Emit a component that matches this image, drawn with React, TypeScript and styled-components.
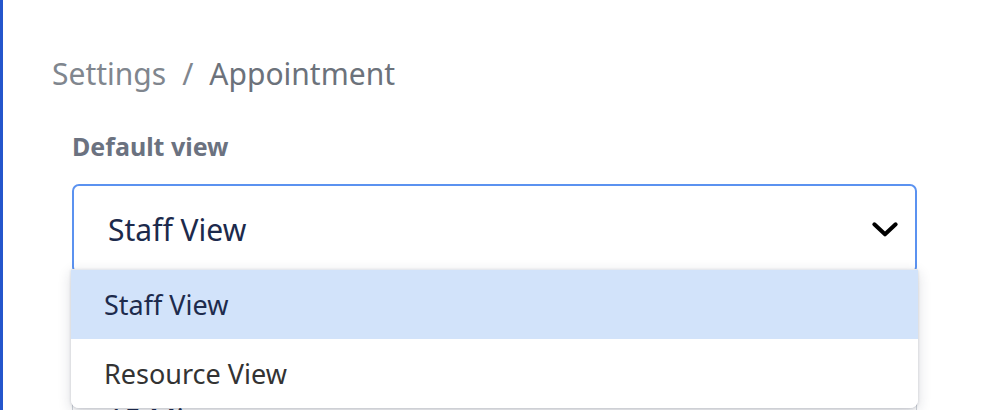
import styled, { createGlobalStyle } from 'styled-components'

const GlobalStyle = createGlobalStyle`
  html, body {
    margin: 0;
    padding: 0;
    background: #ffffff;
    font-family: "Noto Sans", "Open Sans", Arial, sans-serif;
  }
`

const Page = styled.div`
  display: flex;
  height: 410px;
  overflow: hidden;
`

const SideEdge = styled.div`
  width: 3px;
  flex-shrink: 0;
  background: #2456cc;
`

const Content = styled.main`
  flex: 1;
  padding: 55px 0 0 49px;
`

const Breadcrumb = styled.nav`
  display: flex;
  gap: 16px;
  font-size: 30px;
  line-height: 38px;
  color: #7b8189;
`

const Crumb = styled.span<{ $current?: boolean }>`
  color: ${p => (p.$current ? '#6c727b' : '#80868e')};
`

const Form = styled.div`
  width: 845px;
  margin: 37px 0 0 20px;
  display: flex;
  flex-direction: column;
  gap: 46px;
`

const Field = styled.div`
  display: flex;
  flex-direction: column;
  gap: 22px;
`

const Label = styled.label`
  font-size: 25px;
  font-weight: 700;
  line-height: 32px;
  color: #6b7280;
`

const SelectWrap = styled.div`
  position: relative;
`

const SelectBox = styled.div<{ $focused?: boolean }>`
  height: 90px;
  box-sizing: border-box;
  display: flex;
  align-items: center;
  justify-content: space-between;
  padding: 0 14px 0 34px;
  border: ${p => (p.$focused ? '2px solid #5b92f0' : '1.5px solid #d0d4da')};
  border-radius: 7px;
  font-size: 30px;
  color: #1c2a4c;
`

const Chevron = () => (
  <svg width="32" height="32" viewBox="0 0 24 24" fill="none">
    <path
      d="M4 8.5 L12 16 L20 8.5"
      stroke="#000"
      strokeWidth="3"
      strokeLinecap="round"
      strokeLinejoin="round"
    />
  </svg>
)

const Menu = styled.ul`
  position: absolute;
  z-index: 10;
  left: -1px;
  right: -1px;
  top: 85px;
  margin: 0;
  padding: 0;
  list-style: none;
  background: #ffffff;
  border-radius: 0 0 8px 8px;
  border-top: 1px solid #e6e9ee;
  box-shadow: 0 4px 14px rgba(30, 40, 60, 0.16), 0 1px 3px rgba(30, 40, 60, 0.18);
  overflow: hidden;
`

const Option = styled.li<{ $active?: boolean }>`
  height: 69px;
  display: flex;
  align-items: center;
  padding-left: 33px;
  font-size: 27px;
  background: ${p => (p.$active ? '#d2e3fa' : '#ffffff')};
  color: ${p => (p.$active ? '#1d2b4d' : '#333333')};
`

export default function App() {
  return (
    <>
      <GlobalStyle />
      <Page>
        <SideEdge />
        <Content>
          <Breadcrumb>
            <Crumb>Settings</Crumb>
            <Crumb>/</Crumb>
            <Crumb $current>Appointment</Crumb>
          </Breadcrumb>
          <Form>
            <Field>
              <Label>Default view</Label>
              <SelectWrap>
                <SelectBox $focused>
                  <span>Staff View</span>
                  <Chevron />
                </SelectBox>
                <Menu>
                  <Option $active>Staff View</Option>
                  <Option>Resource View</Option>
                </Menu>
              </SelectWrap>
            </Field>
            <Field>
              <Label>Time interval</Label>
              <SelectWrap>
                <SelectBox>
                  <span>15 Minutes</span>
                  <Chevron />
                </SelectBox>
              </SelectWrap>
            </Field>
          </Form>
        </Content>
      </Page>
    </>
  )
}
